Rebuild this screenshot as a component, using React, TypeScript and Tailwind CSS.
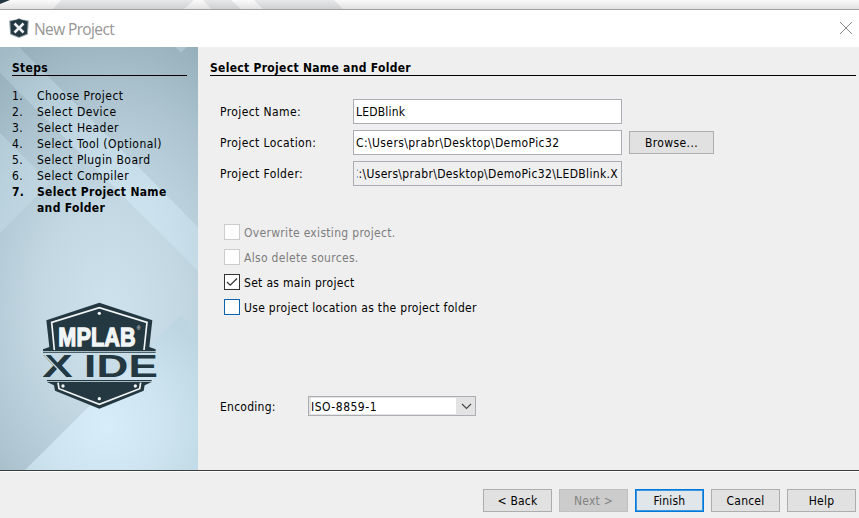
import React from "react";

const steps = [
  "Choose Project",
  "Select Device",
  "Select Header",
  "Select Tool (Optional)",
  "Select Plugin Board",
  "Select Compiler",
];

function Backdrop() {
  return (
    <svg className="absolute inset-0 h-full w-full" viewBox="0 47 198 423" preserveAspectRatio="none">
      <defs>
        <radialGradient id="glow" gradientUnits="userSpaceOnUse" cx="0" cy="0" r="1" gradientTransform="translate(110 310) scale(200 300)">
          <stop offset="0" stopColor="#cde2ed" />
          <stop offset="0.35" stopColor="#c3d8e3" />
          <stop offset="0.7" stopColor="#aec5d1" />
          <stop offset="1" stopColor="#93adb9" />
        </radialGradient>
        <linearGradient id="band" gradientUnits="userSpaceOnUse" x1="0" y1="47" x2="198" y2="250">
          <stop offset="0" stopColor="#d4ecf8" stopOpacity="0.2" />
          <stop offset="0.75" stopColor="#d4ecf8" stopOpacity="0.55" />
          <stop offset="1" stopColor="#d4ecf8" stopOpacity="0.35" />
        </linearGradient>
        <radialGradient id="peak" gradientUnits="userSpaceOnUse" cx="105" cy="425" r="125">
          <stop offset="0" stopColor="#d7edfa" />
          <stop offset="0.5" stopColor="#cde4f0" />
          <stop offset="1" stopColor="#bcd5e0" />
        </radialGradient>
      </defs>
      <rect y="47" width="198" height="423" fill="url(#glow)" />
      <path d="M0 47H19L198 227V271L0 73Z" fill="url(#band)" />
      <path d="M0 133L50 183L0 233Z" fill="#d4ecf8" opacity=".28" />
      <path d="M175 47H187L181 52.5Z" fill="#c8dde8" opacity=".4" />
      <path d="M25 470L181 315L198 331V470Z" fill="url(#peak)" />
    </svg>
  );
}

function Logo() {
  return (
    <svg className="h-[120px] w-[140px]" viewBox="0 0 420 360">
      <g fill="#233840">
        <path d="M208 23L367 76L358 156L377 163V168H39V163L58 156L49 76Z" />
        <path d="M51 261H365L344 271L341 287L208 341L75 287L72 271Z" />
        <path d="M39 171H377V173H39ZM51 255H365V258H51Z" />
      </g>
      <path d="M73 165L65 82L208 38L351 82L342 165" fill="none" stroke="#f2f5f6" strokeWidth="5" />
      <path d="M84 263L87 281L208 328L329 281L332 263" fill="none" stroke="#f2f5f6" strokeWidth="5" />
      <g fill="#f2f5f6">
        <circle cx="208" cy="55" r="5" />
        <circle cx="99" cy="273" r="5" />
        <circle cx="316" cy="273" r="5" />
        <circle cx="208" cy="311" r="5" />
        <text x="85" y="152" fontFamily="Liberation Sans, sans-serif" fontWeight="700" fontSize="80" textLength="232" lengthAdjust="spacingAndGlyphs" stroke="#f2f5f6" strokeWidth="4">MPLAB</text>
        <text x="320" y="106" fontFamily="Liberation Sans, sans-serif" fontSize="15">®</text>
      </g>
      <path d="M39 169.500H377M51 259.500H365" stroke="#a9bcc4" strokeWidth="3" />
      <g fill="#233840" fontFamily="Liberation Sans, sans-serif" fontWeight="700" fontSize="96">
        <text x="37" y="247" textLength="92" lengthAdjust="spacingAndGlyphs">X</text>
        <text x="162" y="247" textLength="222" lengthAdjust="spacingAndGlyphs">IDE</text>
      </g>
      <path d="M44 180L108 248" stroke="#c8dce6" strokeWidth="4" />
    </svg>
  );
}

function AppIcon() {
  return (
    <svg className="-mt-0.5 h-5 w-5" viewBox="0 0 20 20">
      <path d="M10 0L12 1.500L19.800 2.500L18.900 16.500L10 20L1.100 16.500L.2 2.500L8 1.500Z" fill="#8f9da3" />
      <path d="M10 1L18.700 3.500L17.800 15.700L10 18.900L2.200 15.700L1.300 3.500Z" fill="#233840" />
      <path d="M5.500 5.500L14.500 14.500M14.500 5.500L5.500 14.500" stroke="#eef1f3" strokeWidth="2.600" />
    </svg>
  );
}

function Field({ label, children }: { label: string; children: React.ReactNode }) {
  return (
    <div className="flex h-[25px] items-center">
      <div className="w-[133px] whitespace-nowrap">{label}</div>
      {children}
    </div>
  );
}

const input = "flex h-[25px] w-[269px] items-center overflow-hidden border border-[#abadb3] whitespace-nowrap";

function Check({ label, box, text, checked = false }: { label: string; box: string; text: string; checked?: boolean }) {
  return (
    <label className={"flex h-4 items-center gap-1 tracking-[0.31px] " + text}>
      <span className={"h-4 w-4 shrink-0 border bg-white " + box}>
        {checked && (
          <svg className="h-[14px] w-[14px]" viewBox="0 0 14 14">
            <path d="M2 7L5.200 10.200L12 3.500" fill="none" stroke="#333" strokeWidth="1.300" />
          </svg>
        )}
      </span>
      <span className="pt-0.5 whitespace-nowrap">{label}</span>
    </label>
  );
}

const button = "flex h-[23px] w-[69px] items-center justify-center border whitespace-pre tracking-[0.2px]";

export default function App() {
  return (
    <div className="flex h-[518px] w-[859px] flex-col overflow-hidden bg-[#efefef] font-['DejaVu_Sans_Condensed','DejaVu_Sans',sans-serif] text-[12px] leading-4 tracking-[0.4px] text-black">
      <div className="h-[10px] shrink-0 border-b border-[#a0a0a0]">
        <svg className="block h-[9px] w-[859px]" viewBox="0 0 859 9">
          <defs>
            <linearGradient id="shade" x1="0" y1="0" x2="0" y2="1">
              <stop offset="0" stopColor="#000" stopOpacity=".01" />
              <stop offset="1" stopColor="#000" stopOpacity=".11" />
            </linearGradient>
          </defs>
          <rect width="859" height="9" fill="#fdfdfd" />
          <path d="M61 0H194L184 9H53ZM203 0H231L241 9H211ZM254 0H334L343 9H263Z" fill="#e8eaec" />
          <path d="M0 0H10L0 4Z" fill="#233840" />
          <rect width="859" height="9" fill="url(#shade)" />
        </svg>
      </div>
      <header className="flex h-[37px] shrink-0 items-center justify-between bg-white pr-[7px] pl-[9px]">
        <div className="flex items-center gap-[5px]">
          <AppIcon />
          <span className="font-['Open_Sans',sans-serif] text-[15.5px] leading-5 tracking-[-0.62px] text-[#969696]">New Project</span>
        </div>
        <svg className="-mt-0.5 h-[12px] w-[12px]" viewBox="0 0 12 12">
          <path d="M0 0L12 12M12 0L0 12" stroke="#888" strokeWidth="1" />
        </svg>
      </header>
      <div className="flex h-[423px] shrink-0">
        <aside className="relative w-[198px] shrink-0">
          <Backdrop />
          <div className="relative flex h-full flex-col">
            <h2 className="mr-[11px] ml-3 h-[29px] border-b border-black pt-[14px] leading-[15px] font-bold tracking-[0.3px]">Steps</h2>
            <ol className="mt-3 ml-3">
              {steps.map((s, i) => (
                <li key={s} className="flex tracking-[0.45px]">
                  <span className="w-[25px]">{i + 1}.</span>
                  <span className="whitespace-nowrap">{s}</span>
                </li>
              ))}
              <li className="flex font-bold tracking-[0.33px]">
                <span className="w-[25px]">7.</span>
                <span className="whitespace-nowrap">Select Project Name<br />and Folder</span>
              </li>
            </ol>
            <div className="mt-[79px] ml-[30px]"><Logo /></div>
          </div>
        </aside>
        <main className="flex-1 pr-[3px] pl-3">
          <h2 className="h-[29px] border-b border-black pt-[14px] leading-[15px] font-bold tracking-[0.3px]">Select Project Name and Folder</h2>
          <div className="mt-[23px] ml-[10px] flex flex-col gap-[6px]">
            <Field label="Project Name:">
              <div className={input + " bg-white pl-[2px] tracking-[0.2px]"}>LEDBlink</div>
            </Field>
            <Field label="Project Location:">
              <div className={input + " bg-white pl-[2px]"}>C:\Users\prabr\Desktop\DemoPic32</div>
              <div className="ml-[7px] flex h-[23px] w-[85px] items-center justify-center border border-[#adadad] bg-[#e1e1e1]">Browse...</div>
            </Field>
            <Field label="Project Folder:">
              <div className={input + " px-[3px]"}>
                <div className="flex w-full justify-end overflow-hidden tracking-[0.34px]">C:\Users\prabr\Desktop\DemoPic32\LEDBlink.X</div>
              </div>
            </Field>
          </div>
          <div className="mt-[38px] ml-[14px] flex flex-col gap-[9px]">
            <Check label="Overwrite existing project." box="border-[#cccccc]" text="text-[#7d7d7d]" />
            <Check label="Also delete sources." box="border-[#cccccc]" text="text-[#7d7d7d]" />
            <Check label="Set as main project" box="border-[#333333]" text="text-black" checked />
            <Check label="Use project location as the project folder" box="border-[#0a64ad]" text="text-black" />
          </div>
          <div className="mt-[81px] ml-[10px] flex h-5 items-center">
            <div className="w-[88px] pt-0.5 tracking-[0.25px]">Encoding:</div>
            <div className="flex h-5 w-[168px] border border-[#abadb3] bg-[#e3e3e3] p-px">
              <div className="ml-px flex w-[145px] items-center bg-white pt-0.5 tracking-[0.5px]">ISO-8859-1</div>
              <svg className="ml-1 h-4 w-[14px]" viewBox="0 0 14 16">
                <path d="M2 6L6.500 10.500L11 6" fill="none" stroke="#444" strokeWidth="1.100" />
              </svg>
            </div>
          </div>
        </main>
      </div>
      <footer className="flex h-12 shrink-0 justify-end gap-[7px] border-t border-[#3c3c3c] pr-[3px] pt-[18px] shadow-[inset_0_1px_0_#fff]">
        <div className={button + " border-[#adadad] bg-[#e1e1e1]"}>{"< Back"}</div>
        <div className={button + " border-[#bfbfbf] bg-[#cccccc] text-[#838383]"}>{"Next >"}</div>
        <div className={button + " border-[#0078d7] bg-[#e1e6eb] shadow-[inset_0_0_0_1px_#3c98e0]"}>Finish</div>
        <div className={button + " border-[#adadad] bg-[#e1e1e1]"}>Cancel</div>
        <div className={button + " border-[#adadad] bg-[#e1e1e1]"}>Help</div>
      </footer>
    </div>
  );
}
